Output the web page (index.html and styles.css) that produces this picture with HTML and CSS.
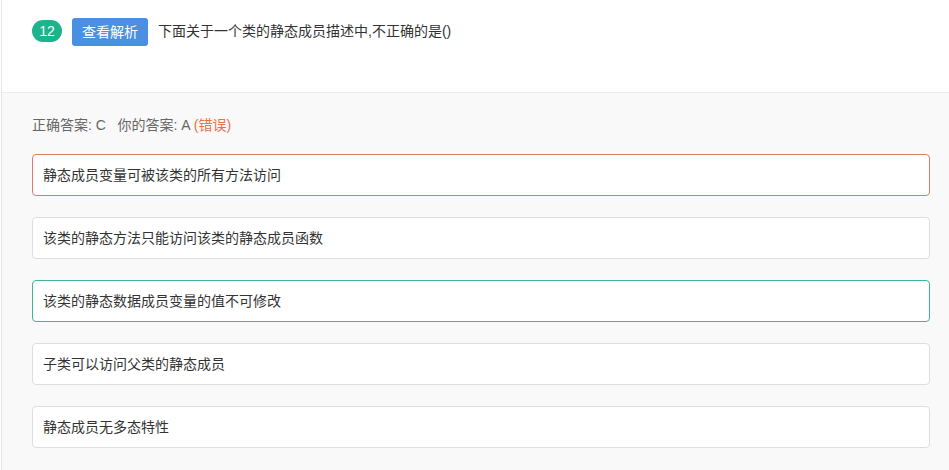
FILE: index.html
```html
<!DOCTYPE html>
<html lang="zh-CN">
<head>
    <meta charset="UTF-8">
    <title>题目解析</title>
    <link rel="stylesheet" href="styles.css">
</head>
<body>
    <div class="page">
        <div class="question">
            <span class="num">12</span>
            <a class="btn" href="#">查看解析</a>
            <span class="title">下面关于一个类的静态成员描述中,不正确的是()</span>
        </div>
        <div class="answer">
            <div class="result">正确答案: C&nbsp;&nbsp;&nbsp;你的答案: A <span class="wrong">(错误)</span></div>
            <ul class="options">
                <li class="option picked">静态成员变量可被该类的所有方法访问</li>
                <li class="option">该类的静态方法只能访问该类的静态成员函数</li>
                <li class="option right">该类的静态数据成员变量的值不可修改</li>
                <li class="option">子类可以访问父类的静态成员</li>
                <li class="option">静态成员无多态特性</li>
            </ul>
        </div>
    </div>
</body>
</html>
```

FILE: styles.css
```css
body {
    margin: 0;
    font-family: "Liberation Sans", Arial, "Noto Sans CJK SC", sans-serif;
    color: #333;
    background: #fff;
}
.page {
    margin-left: 1px;
    border-left: 1px solid #e6e6e6;
    min-height: 470px;
    background: #f9f9f9;
}
.question {
    background: #fff;
    height: 93px;
    border-bottom: 1px solid #ececec;
    padding: 18px 0 0 30px;
    box-sizing: border-box;
    display: flex;
    align-items: flex-start;
}
.num {
    margin-top: 2px;
    width: 30px;
    height: 22px;
    line-height: 22px;
    border-radius: 11px;
    background: #1db38b;
    color: #fff;
    font-size: 14px;
    text-align: center;
}
.btn {
    margin-left: 10px;
    width: 76px;
    height: 28px;
    line-height: 28px;
    border-radius: 3px;
    background: #4a90e2;
    color: #fff;
    font-size: 14px;
    text-align: center;
    text-decoration: none;
}
.title {
    margin-left: 10px;
    margin-top: 4px;
    font-size: 14px;
    line-height: 18px;
    color: #333;
}
.answer {
    padding: 23px 19px 20px 30px;
}
.result {
    font-size: 14px;
    line-height: 18px;
    color: #666;
}
.wrong {
    color: #e8704f;
}
.options {
    list-style: none;
    margin: 20px 0 0;
    padding: 0;
    display: flex;
    flex-direction: column;
    gap: 21px;
}
.option {
    height: 42px;
    box-sizing: border-box;
    border: 1px solid #dedede;
    border-radius: 4px;
    background: #fff;
    padding: 0 10px;
    font-size: 14px;
    line-height: 40px;
    color: #333;
}
.option.picked {
    border-color: #e07b66;
}
.option.right {
    border-color: #3fb598;
}
```
